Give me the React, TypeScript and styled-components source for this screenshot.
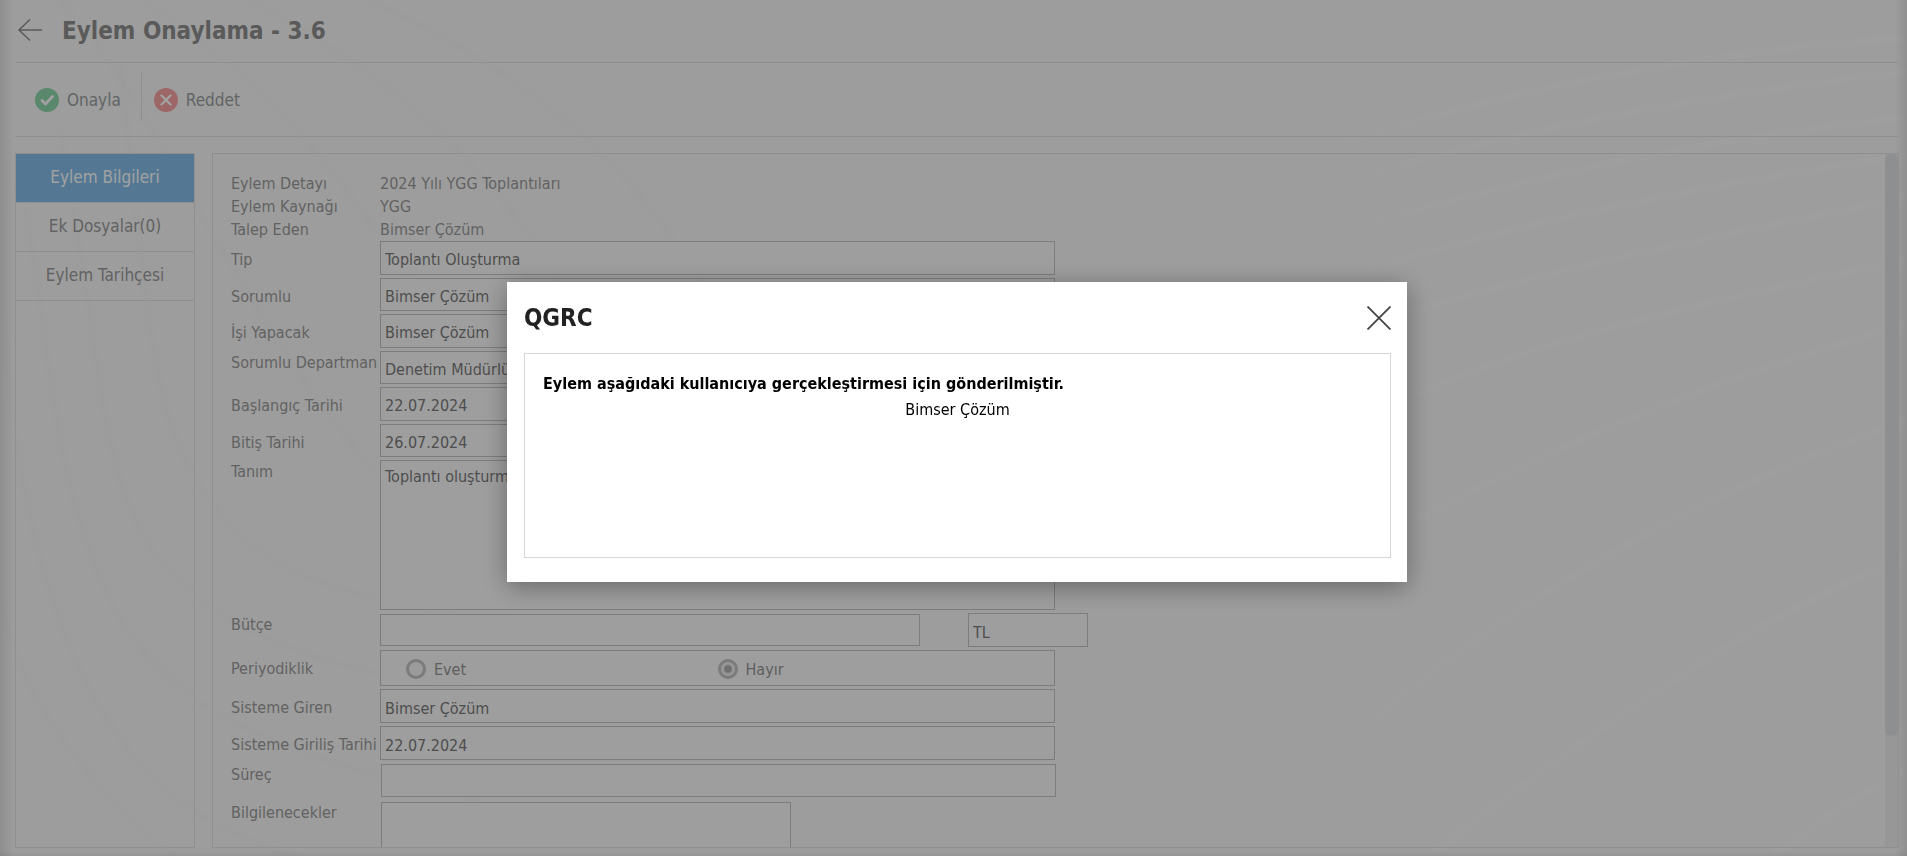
import React from 'react';
import styled, { createGlobalStyle, css } from 'styled-components';

const GlobalStyle = createGlobalStyle`
  *, *::before, *::after { box-sizing: border-box; }
  body {
    margin: 0;
    background: #f9f9f9;
    color: #9c9c9c;
    font: 16px/23px "DejaVu Sans Condensed", Tahoma, "DejaVu Sans", sans-serif;
  }
  button, input, textarea { font-family: inherit; }
`;

const Page = styled.div`
  position: relative;
  display: flex;
  flex-direction: column;
  height: 100vh;
  padding: 0 8px 8px 15px;
  overflow: hidden;
  background:
    linear-gradient(to right, rgba(0, 0, 0, 0.09), transparent 14px),
    linear-gradient(to left, rgba(0, 0, 0, 0.09), transparent 12px),
    linear-gradient(to top, rgba(0, 0, 0, 0.05), transparent 6px);
`;

const Waves = styled.svg`
  position: absolute;
  inset: 0;
  width: 100%;
  height: 100%;
  z-index: -1;
  fill: none;
`;

const Header = styled.header`
  display: flex;
  align-items: center;
  gap: 18px;
  height: 63px;
  flex: none;
  border-bottom: 1px solid #e3e3e3;
`;

const IconButton = styled.button`
  display: flex;
  padding: 0;
  border: 0;
  background: none;
  color: inherit;
  cursor: pointer;
`;

const PageTitle = styled.h1`
  margin: 0;
  color: #8f8f8f;
  font-size: 24px;
  line-height: 32px;
  font-weight: 700;
`;

const Toolbar = styled.div`
  display: flex;
  align-items: center;
  height: 74px;
  flex: none;
  border-bottom: 1px solid #e3e3e3;
`;

const Divider = styled.span`
  align-self: flex-start;
  width: 1px;
  height: 48px;
  margin-top: 10px;
  background: #e3e3e3;
`;

const ToolButton = styled.button`
  display: flex;
  align-items: center;
  gap: 8px;
  padding: 0 20px 0 12px;
  border: 0;
  background: none;
  color: #9aa0a2;
  font-size: 17px;
  line-height: 24px;
  cursor: pointer;

  &:first-child { padding-left: 20px; }
`;

const Content = styled.main`
  display: flex;
  gap: 17px;
  flex: 1;
  min-height: 0;
  margin-top: 16px;
`;

const Sidebar = styled.nav`
  width: 180px;
  flex: none;
  border: 1px solid #e3e3e3;
`;

const Tab = styled.a<{ $active?: boolean }>`
  display: block;
  padding: 11px 0 13px;
  border-bottom: 1px solid #e3e3e3;
  color: #9c9c9c;
  font-size: 17px;
  line-height: 24px;
  text-align: center;
  text-decoration: none;

  ${(p) => p.$active && css`
    background: #85bfeb;
    color: #fff;
  `}
`;

const Panel = styled.section`
  display: flex;
  flex: 1;
  min-width: 0;
  border: 1px solid #e3e3e3;
`;

const Form = styled.form`
  flex: 1;
  min-width: 0;
  padding: 18px;
  overflow-y: auto;
  scrollbar-width: none;
`;

const ScrollTrack = styled.div`
  width: 13px;
  flex: none;
  background: #efefef;
`;

const ScrollThumb = styled.div`
  height: 84%;
  border-radius: 6px;
  background: #e0e3e5;
`;

const Facts = styled.dl`
  display: grid;
  grid-template-columns: 149px 1fr;
  margin: 0;

  dd { margin: 0; }
`;

const Rows = styled.div`
  display: grid;
  gap: 3px;
`;

const EvenRows = styled(Rows)`
  grid-auto-rows: 1fr;
  height: 216px;
`;

const Row = styled.div`
  display: grid;
  grid-template-columns: 149px minmax(0, 675px);
`;

const Label = styled.label<{ $top?: boolean }>`
  padding-top: ${(p) => (p.$top ? 0 : 7)}px;
  white-space: nowrap;
`;

const fieldBox = css`
  width: 100%;
  border: 1px solid #c5c5c5;
  border-radius: 0;
  background: rgba(255, 255, 255, 0.35);
  color: #7c7c7c;
  font-size: 16px;
  line-height: 23px;
  outline: none;
`;

const Input = styled.input<{ $h?: number }>`
  ${fieldBox}
  min-height: ${(p) => p.$h ?? 33}px;
  padding: 4px 4px 0;
`;

const TextArea = styled.textarea<{ $h: number }>`
  ${fieldBox}
  display: block;
  height: ${(p) => p.$h}px;
  padding: 4px;
  resize: none;
`;

const Budget = styled.div`
  display: grid;
  grid-template-columns: minmax(0, 540px) 120px;
  gap: 48px;
  align-items: center;
  width: 708px;
`;

const Lookup = styled.div<{ $w: number }>`
  max-width: ${(p) => p.$w}px;
  margin: 1px -1px 1px 1px;
  display: grid;
`;

const RadioBox = styled.div`
  ${fieldBox}
  display: grid;
  grid-template-columns: 1fr 1fr;
  align-items: center;
  min-height: 36px;
  padding-top: 2px;
  color: #969696;

  label:first-child { padding-left: 25px; }
`;

const RadioLabel = styled.label`
  display: flex;
  align-items: center;
  gap: 8px;
`;

const Radio = styled.input`
  appearance: none;
  width: 20px;
  height: 20px;
  margin: 0;
  border: 3px solid #c3c3c3;
  border-radius: 50%;
  background: #f6f6f6;

  &:checked {
    background: radial-gradient(circle, #b0b0b0 3px, #f0f0f0 5px);
  }
`;

const Backdrop = styled.div`
  position: fixed;
  inset: 0;
  display: flex;
  align-items: center;
  justify-content: center;
  padding: 8px 0 0 7px;
  background: rgba(0, 0, 0, 0.37);
`;

const Dialog = styled.div`
  display: flex;
  flex-direction: column;
  width: 900px;
  max-width: 100%;
  min-height: 300px;
  padding: 0 16px 24px 17px;
  background: #fff;
  box-shadow: 0 5px 24px rgba(0, 0, 0, 0.35);
`;

const DialogHeader = styled.div`
  display: flex;
  align-items: center;
  justify-content: space-between;
  height: 71px;
  color: #444;
`;

const DialogTitle = styled.h2`
  margin: 0;
  color: #222;
  font-size: 24px;
  line-height: 32px;
`;

const DialogBody = styled.div`
  flex: 1;
  padding: 17px 18px;
  border: 1px solid #d6d6d6;
  color: #000;
  line-height: 26px;
`;

const Message = styled.p<{ $center?: boolean }>`
  margin: 0;
  font-weight: ${(p) => (p.$center ? 400 : 700)};
  text-align: ${(p) => (p.$center ? 'center' : 'left')};
`;

const leftWaves = [
  'M0 600 C20 700 90 790 190 870',
  'M8 160 C-10 330 20 560 90 690 S230 830 330 870',
  'M20 180 C50 330 50 480 110 600 S300 760 480 800',
  'M60 130 C100 330 95 480 160 560 S330 670 520 700',
  'M120 60 C150 330 150 420 210 500 S330 590 480 620',
  'M60 0 C150 90 240 330 400 500',
  'M140 0 C240 60 330 150 420 300',
  'M250 0 C380 70 470 140 560 280',
  'M370 0 C520 70 620 150 700 280',
];

const rightWaves = [
  'M1774 856 Q1830 810 1907 770',
  'M1427 856 C1560 760 1720 630 1907 557',
  'M1230 856 C1360 720 1560 540 1907 420',
  'M900 856 C1120 720 1400 460 1907 325',
  'M1300 450 C1500 340 1680 310 1907 259',
  'M1300 350 C1500 275 1680 245 1907 197',
  'M1300 290 C1500 225 1700 185 1907 156',
  'M1300 245 C1500 180 1700 140 1907 117',
  'M1300 200 C1450 140 1700 95 1907 72',
  'M1300 160 C1450 100 1700 50 1907 38',
];

const people = [
  { id: 'tip', label: 'Tip', value: 'Toplantı Oluşturma' },
  { id: 'sorumlu', label: 'Sorumlu', value: 'Bimser Çözüm' },
  { id: 'yapacak', label: 'İşi Yapacak', value: 'Bimser Çözüm' },
  { id: 'departman', label: 'Sorumlu Departman', value: 'Denetim Müdürlüğü', top: true },
  { id: 'baslangic', label: 'Başlangıç Tarihi', value: '22.07.2024' },
  { id: 'bitis', label: 'Bitiş Tarihi', value: '26.07.2024' },
];

export default function App() {
  return (
    <>
      <GlobalStyle />
      <Page>
        <Waves viewBox="0 0 1907 856" preserveAspectRatio="none" aria-hidden="true">
          <defs>
            <linearGradient id="fade" gradientUnits="userSpaceOnUse" x1="1250" y1="0" x2="1700" y2="0">
              <stop offset="0" stopColor="#fff" stopOpacity="0" />
              <stop offset="1" stopColor="#fff" stopOpacity="0.4" />
            </linearGradient>
          </defs>
          <g stroke="#000" strokeOpacity="0.009" strokeWidth="7">
            {leftWaves.map((d) => <path key={d} d={d} />)}
          </g>
          <g stroke="url(#fade)" strokeWidth="7">
            {rightWaves.map((d) => <path key={d} d={d} />)}
          </g>
        </Waves>

        <Header>
          <IconButton type="button" aria-label="Geri">
            <svg width="29" height="24" viewBox="0 0 29 24" fill="none" stroke="#8f8f8f" strokeWidth="1.5">
              <path d="M15 .5 4 11l11 10.500M4 11h23" />
            </svg>
          </IconButton>
          <PageTitle>Eylem Onaylama - 3.6</PageTitle>
        </Header>

        <Toolbar>
          <ToolButton type="button">
            <svg width="24" height="24" viewBox="0 0 24 24" fill="none">
              <circle cx="12" cy="12" r="12" fill="#8fd8ab" />
              <path d="m7 12.500 3.500 3.500 7-7.500" stroke="#fff" strokeWidth="2.800" strokeLinecap="round" strokeLinejoin="round" />
            </svg>
            Onayla
          </ToolButton>
          <Divider />
          <ToolButton type="button">
            <svg width="24" height="24" viewBox="0 0 24 24" fill="none">
              <circle cx="12" cy="12" r="12" fill="#fba3a3" />
              <path d="m7.500 7.500 9 9m0-9-9 9" stroke="#fff" strokeWidth="2.400" strokeLinecap="round" />
            </svg>
            Reddet
          </ToolButton>
        </Toolbar>

        <Content>
          <Sidebar>
            <Tab href="#bilgiler" $active>Eylem Bilgileri</Tab>
            <Tab href="#dosyalar">Ek Dosyalar(0)</Tab>
            <Tab href="#tarihce">Eylem Tarihçesi</Tab>
          </Sidebar>

          <Panel>
            <Form>
              <Facts>
                <dt>Eylem Detayı</dt>
                <dd>2024 Yılı YGG Toplantıları</dd>
                <dt>Eylem Kaynağı</dt>
                <dd>YGG</dd>
                <dt>Talep Eden</dt>
                <dd>Bimser Çözüm</dd>
              </Facts>
              <Rows>
                <EvenRows>
                  {people.map((f) => (
                    <Row key={f.id}>
                      <Label htmlFor={f.id} $top={f.top}>{f.label}</Label>
                      <Input id={f.id} defaultValue={f.value} />
                    </Row>
                  ))}
                </EvenRows>
                <Row>
                  <Label htmlFor="tanim" $top>Tanım</Label>
                  <TextArea id="tanim" $h={150} defaultValue="Toplantı oluşturma" />
                </Row>
                <Row>
                  <Label htmlFor="butce" $top>Bütçe</Label>
                  <Budget>
                    <Input id="butce" $h={32} />
                    <Input aria-label="Para birimi" $h={34} defaultValue="TL" />
                  </Budget>
                </Row>
                <Row>
                  <Label as="span">Periyodiklik</Label>
                  <RadioBox role="radiogroup" aria-label="Periyodiklik">
                    <RadioLabel><Radio type="radio" name="periyot" />Evet</RadioLabel>
                    <RadioLabel><Radio type="radio" name="periyot" defaultChecked />Hayır</RadioLabel>
                  </RadioBox>
                </Row>
                <Row>
                  <Label htmlFor="giren">Sisteme Giren</Label>
                  <Input id="giren" $h={34} defaultValue="Bimser Çözüm" />
                </Row>
                <Row>
                  <Label htmlFor="giris">Sisteme Giriliş Tarihi</Label>
                  <Input id="giris" $h={34} defaultValue="22.07.2024" />
                </Row>
                <Row>
                  <Label htmlFor="surec" $top>Süreç</Label>
                  <Lookup $w={675}><Input id="surec" /></Lookup>
                </Row>
                <Row>
                  <Label htmlFor="bilgi" $top>Bilgilenecekler</Label>
                  <Lookup $w={410}><TextArea id="bilgi" $h={160} /></Lookup>
                </Row>
              </Rows>
            </Form>
            <ScrollTrack><ScrollThumb /></ScrollTrack>
          </Panel>
        </Content>
      </Page>

      <Backdrop>
        <Dialog role="dialog" aria-modal="true" aria-labelledby="dialog-title">
          <DialogHeader>
            <DialogTitle id="dialog-title">QGRC</DialogTitle>
            <IconButton type="button" aria-label="Kapat">
              <svg width="24" height="24" viewBox="0 0 24 24" fill="none" stroke="currentColor" strokeWidth="1.800">
                <path d="m.5.5 23 23m0-23-23 23" />
              </svg>
            </IconButton>
          </DialogHeader>
          <DialogBody>
            <Message>Eylem aşağıdaki kullanıcıya gerçekleştirmesi için gönderilmiştir.</Message>
            <Message $center>Bimser Çözüm</Message>
          </DialogBody>
        </Dialog>
      </Backdrop>
    </>
  );
}
